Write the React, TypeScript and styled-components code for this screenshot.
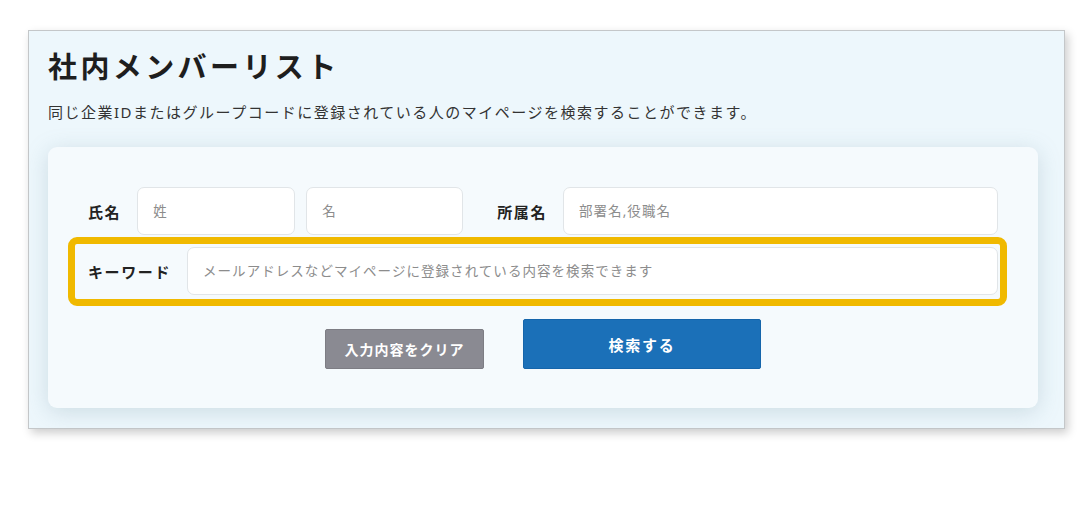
import React from "react"
import styled, { createGlobalStyle } from "styled-components"

const GlobalStyle = createGlobalStyle`
    body {
        margin: 0;
        background: #ffffff;
        font-family: "Noto Sans", "Noto Sans CJK JP", sans-serif;
        color: #222;
    }
`

const Page = styled.div`
    width: 1092px;
    height: 520px;
    padding: 30px 0 0 28px;
    box-sizing: border-box;
`

const Frame = styled.section`
    width: 1037px;
    height: 399px;
    box-sizing: border-box;
    border: 1px solid #c4c7c9;
    background: #edf7fc;
    box-shadow: 3px 4px 9px rgba(0, 0, 0, 0.2);
    padding: 14px 26px 0 19px;
`

const Title = styled.h1`
    margin: 0;
    font-size: 29px;
    line-height: 44px;
    font-weight: 700;
    letter-spacing: 3.4px;
    color: #1e1e1e;
`

const Lead = styled.p`
    margin: 11px 0 0;
    font-size: 15px;
    line-height: 24px;
    letter-spacing: 1.5px;
    color: #333;
`

const Card = styled.div`
    margin-top: 23px;
    width: 990px;
    box-sizing: border-box;
    background: #f5fafd;
    border-radius: 9px;
    box-shadow: 0 4px 22px rgba(120, 150, 165, 0.28);
    padding: 40px 40px 39px;
    display: flex;
    flex-direction: column;
    gap: 12px;
`

const Row = styled.div`
    position: relative;
    display: flex;
    align-items: center;
`

const Label = styled.label<{ $gap?: number }>`
    font-size: 15px;
    font-weight: 700;
    letter-spacing: 1.6px;
    color: #222;
    white-space: nowrap;
    margin-right: 16px;
    margin-left: ${(p) => p.$gap ?? 0}px;
`

const Field = styled.input<{ $width?: number }>`
    height: 48px;
    box-sizing: border-box;
    ${(p) => (p.$width ? `width: ${p.$width}px;` : "flex: 1;")}
    border: 1px solid #e1e5e8;
    border-radius: 7px;
    background: #fff;
    padding: 0 15px;
    font-family: "Noto Sans", "Noto Sans CJK JP", sans-serif;
    font-size: 13.5px;
    letter-spacing: 1.05px;
    color: #333;
    outline: none;

    &::placeholder {
        color: #8c8c8c;
    }
`

const Highlight = styled.div`
    position: absolute;
    top: -10px;
    bottom: -11px;
    left: -20px;
    right: -9px;
    border: 7px solid #f0b900;
    border-radius: 9px;
    pointer-events: none;
`

const Actions = styled.div`
    margin-top: 12px;
    display: flex;
    justify-content: center;
    align-items: flex-end;
    gap: 39px;
`

const Button = styled.button<{ $primary?: boolean }>`
    box-sizing: border-box;
    width: ${(p) => (p.$primary ? 238 : 159)}px;
    height: ${(p) => (p.$primary ? 50 : 40)}px;
    border: 1px solid ${(p) => (p.$primary ? "#1565ab" : "#7d7d84")};
    border-radius: 2px;
    background: ${(p) => (p.$primary ? "#1b70b8" : "#8a8a92")};
    color: #fff;
    font-family: "Noto Sans", "Noto Sans CJK JP", sans-serif;
    font-size: ${(p) => (p.$primary ? 15 : 14)}px;
    font-weight: 700;
    letter-spacing: ${(p) => (p.$primary ? 1.8 : 1)}px;
    cursor: pointer;
`

export default function App() {
    return (
        <Page>
            <GlobalStyle />
            <Frame>
                <Title>社内メンバーリスト</Title>
                <Lead>同じ企業IDまたはグループコードに登録されている人のマイページを検索することができます。</Lead>
                <Card>
                    <Row>
                        <Label>氏名</Label>
                        <Field $width={158} placeholder="姓" />
                        <Field $width={157} placeholder="名" style={{ marginLeft: 11 }} />
                        <Label $gap={34}>所属名</Label>
                        <Field placeholder="部署名,役職名" />
                    </Row>
                    <Row>
                        <Label>キーワード</Label>
                        <Field placeholder="メールアドレスなどマイページに登録されている内容を検索できます" />
                        <Highlight />
                    </Row>
                    <Actions>
                        <Button type="button">入力内容をクリア</Button>
                        <Button type="button" $primary>検索する</Button>
                    </Actions>
                </Card>
            </Frame>
        </Page>
    )
}
